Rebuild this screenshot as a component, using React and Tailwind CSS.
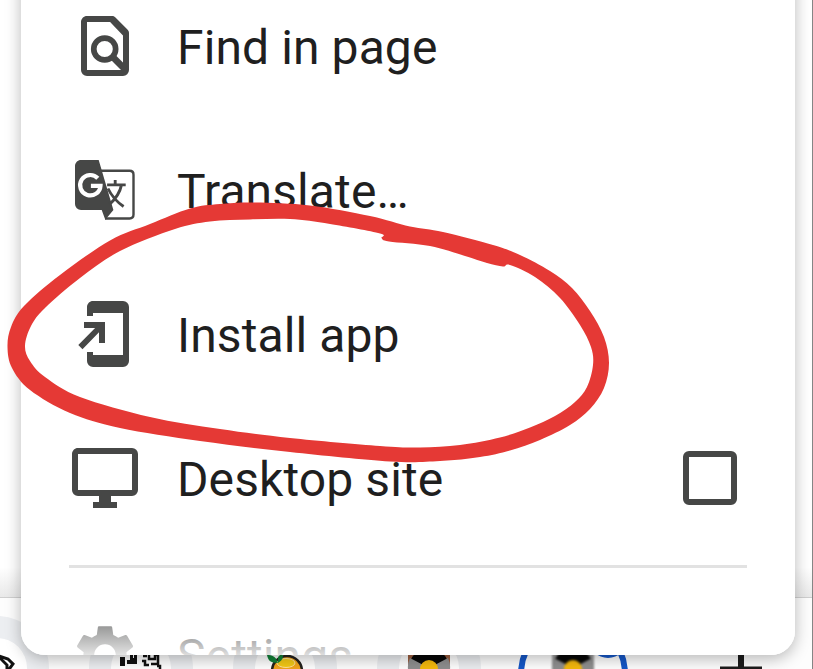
const INK = '#464746';

// Closed smooth curve through the given points (Catmull-Rom converted to Béziers).
function smooth(points) {
  const n = points.length;
  let d = `M${points[0][0]} ${points[0][1]}`;
  for (let i = 0; i < n; i++) {
    const [a, b, c, e] = [points[(i - 1 + n) % n], points[i], points[(i + 1) % n], points[(i + 2) % n]];
    d += `C${b[0] + (c[0] - a[0]) / 6} ${b[1] + (c[1] - a[1]) / 6} ${c[0] - (e[0] - b[0]) / 6} ${c[1] - (e[1] - b[1]) / 6} ${c[0]} ${c[1]}`;
  }
  return d + 'Z';
}

const OUTER = [[7.5, 347], [11, 327], [24, 306], [60, 275], [110, 240.5], [150, 224], [190, 208.5], [220, 204], [255, 202.5], [310, 205.5], [370, 216], [410, 226.5], [443, 232], [493, 245], [520, 255], [550, 271], [572, 288], [590, 311], [604, 337], [609, 363], [604, 388], [590, 409], [570, 425], [540, 440], [510, 450.5], [480, 457], [440, 461], [390, 461.500], [290, 452], [200, 441], [120, 428], [70, 413], [30, 390], [12, 368]];
const INNER = [[25, 346], [31, 326], [45, 308], [80, 278], [120, 251], [175, 229], [210, 221.5], [250, 219.5], [290, 219], [330, 224], [380, 233.5], [381.5, 238], [389, 241.5], [430, 246], [465, 256], [487, 263], [503, 266.5], [510, 265], [535, 277], [560, 298], [580, 325], [591, 347], [593, 365], [587, 387], [575, 402], [555, 416], [530, 427.5], [500, 437.5], [460, 445], [420, 447.5], [380, 446], [290, 438], [220, 429], [150, 417], [80, 397], [45, 377], [30, 361]];

function Icon({ children }) {
  return <svg className="size-[72px] shrink-0" viewBox="0 0 24 24" fill={INK}>{children}</svg>;
}

function Row({ icon, label, children }) {
  return (
    <div className="flex h-36 items-center pr-[58px] pl-12">
      <Icon>{icon}</Icon>
      <span className="ml-9 flex-1 pt-1 text-[48px] leading-none tracking-[0.1px] text-[#1f1f1f]">{label}</span>
      {children}
    </div>
  );
}

const find = (
  <>
    <path fillRule="evenodd" d="M6 2h8.300c.5 0 .8.1 1.100.4l4 4c.4.4.6.8.6 1.300V20a2 2 0 0 1-2 2H6a2 2 0 0 1-2-2V4c0-1.100.9-2 2-2Zm0 2v16h12V8.500L13.700 4Z" />
    <circle cx="11.900" cy="13" r="3.650" fill="none" stroke={INK} strokeWidth="1.900" />
    <path d="m14.300 15.400 4.300 4.300" stroke={INK} strokeWidth="2.200" />
  </>
);
const translate = (
  <>
    <path d="M10 5.600h10.200c.8 0 1.300.5 1.300 1.300v13.300c0 .8-.5 1.300-1.300 1.300H12" fill="none" stroke={INK} strokeWidth=".8" />
    <path d="M4 2h5.900l4.900 16.700-2.700 3.200-1.200-3.200H4a2 2 0 0 1-2-2V4c0-1.100.9-2 2-2Z" />
    <path d="M9.600 8.100A3.400 3.400 0 1 0 10.500 10.600H7.300" fill="none" stroke="#fff" strokeWidth="1.400" />
    <path d="M12.700 10.300h6.200M15.400 8.700v1.600M17.500 10.300c-.5 2.500-2 4.700-4 6.500M13 11.500c1.200 2.500 3 4.500 5.200 6" fill="none" stroke={INK} strokeWidth=".95" />
  </>
);
const install = (
  <>
    <path d="M6 6V3c0-1.100.9-2 2-2h10a2 2 0 0 1 2 2v18a2 2 0 0 1-2 2H8a2 2 0 0 1-2-2v-3h2v1h10V5H8v1Z" />
    <path d="M5 8h7v7h-2v-3.600l-5.500 5.700-1.400-1.400L8.700 10H5Z" />
  </>
);
const desktop = (
  <path fillRule="evenodd" d="M3 2h18a2 2 0 0 1 2 2v12a2 2 0 0 1-2 2h-7v2h2v2H8v-2h2v-2H3a2 2 0 0 1-2-2V4c0-1.100.9-2 2-2Zm0 2v12h18V4Z" />
);
const gear = (
  <path fillRule="evenodd" d="M19.140 12.940c.04-.3.060-.61.060-.940 0-.32-.02-.640-.070-.940l2.030-1.580c.18-.14.230-.41.120-.61l-1.920-3.320c-.12-.22-.37-.29-.59-.22l-2.390.96c-.5-.38-1.030-.7-1.620-.940l-.36-2.540c-.04-.24-.24-.41-.48-.41h-3.840c-.24 0-.43.17-.47.41l-.36 2.540c-.59.24-1.130.57-1.620.940l-2.390-.96c-.22-.08-.47 0-.59.22L2.740 8.870c-.12.210-.08.470.12.610l2.030 1.580c-.05.3-.09.630-.09.940s.02.640.07.940l-2.030 1.580c-.18.14-.23.410-.12.610l1.920 3.320c.12.220.37.290.59.220l2.390-.96c.5.380 1.030.7 1.620.940l.36 2.540c.05.240.24.410.48.410h3.840c.24 0 .44-.17.470-.410l.36-2.540c.59-.24 1.130-.56 1.620-.940l2.390.96c.22.080.470 0 .59-.22l1.920-3.320c.12-.22.070-.47-.12-.610l-2.010-1.580ZM12 15.600c-1.980 0-3.600-1.620-3.600-3.600s1.620-3.600 3.600-3.600 3.600 1.620 3.600 3.600-1.620 3.600-3.600 3.600Z" />
);

function Tab({ children }) {
  return (
    <svg className="h-[72px] w-36 shrink-0" viewBox="-72 -52 144 72">
      <circle r="52" fill="#eceef1" />
      <circle r="30" fill="#fff" />
      {children}
    </svg>
  );
}

function Record({ blurred }) {
  return (
    <g className={blurred ? 'blur-[1px]' : ''}>
      <rect x="-21" y="-21" width="42" height="42" rx="8" fill={blurred ? '#9a9a9a' : '#9c5f40'} />
      <circle r="20" fill="#080808" />
      <path d="M0 0-19-10A21 21 0 0 0-19 8ZM0 0 19-10A21 21 0 0 1 19 8Z" fill="#8f8f8f" />
      <circle cy="1" r="9" fill="#f5b90c" />
    </g>
  );
}

export default function App() {
  return (
    <div className="relative flex h-[669px] w-[813px] flex-col overflow-hidden border-r border-[#858585] bg-[#fdfdfd] font-[Roboto,sans-serif]">
      <div className="h-[598px] shrink-0 border-b border-[#cfcfcf] bg-linear-to-b from-white from-95% to-[#e9e9e9]" />
      <div className="-ml-[75px] flex w-[888px] shrink-0 pt-[18px]">
        <Tab>
          <path d="m-13-17 24 8L16-4 10 4M0-13 10-3V8" fill="none" stroke="#111" strokeWidth="3" />
        </Tab>
        <Tab>
          <path d="M-21-11h5v9h-5zM-14-8h3v-5h3v3h1v-4h3v10h-10Z" fill="#111" />
          <path d="M2-12h4m-5 5h3v4h4M8-14v5h6v-4h3v9h-7m6 2h3v4" fill="none" stroke="#111" strokeWidth="2.500" />
        </Tab>
        <Tab>
          <circle cx="2" cy="3" r="15" fill="#f4a51c" stroke="#25221e" strokeWidth="2.500" />
          <ellipse cx="1" cy="-5" rx="9" ry="4.500" fill="#f5ca16" stroke="#ffe39a" />
          <path d="M-18-13c5 0 9 1 11 8-8 0-10-3-11-8Zm11 2 4-4c2 4 1 7-4 10Z" fill="#128238" />
        </Tab>
        <Tab><Record /></Tab>
        <svg className="h-[72px] w-36 shrink-0" viewBox="-72 -52 144 72">
          <circle cy="6" r="52" fill="#fff" stroke="#1557c8" strokeWidth="6" />
          <Record blurred />
          <circle cx="35" cy="-29" r="19" fill="#1557c8" />
        </svg>
        <svg className="h-[72px] w-36 shrink-0" viewBox="-72 -52 144 72">
          <path d="M24-22V22M3 1.500H45" stroke="#1b1b1b" strokeWidth="6" />
        </svg>
      </div>
      <div className="absolute -top-10 left-[21px] h-[695px] w-[774px] rounded-[24px] shadow-[0_4px_16px_rgba(0,0,0,0.28)]">
        <div className="h-full overflow-hidden rounded-[24px] bg-white pt-[13.500px]">
          <Row icon={find} label="Find in page" />
          <Row icon={translate} label="Translate…" />
          <Row icon={install} label="Install app" />
          <Row icon={desktop} label="Desktop site">
            <span className="size-[54px] rounded-[6px] border-6 border-[#464746]" />
          </Row>
          <hr className="mt-[15.500px] mr-12 ml-12 h-[3px] border-0 bg-[#e2e2e2]" />
          <div className="relative mt-[15px]">
            <Row icon={gear} label="Settings" />
            <div className="absolute inset-x-0 top-[40px] h-[32px] bg-linear-to-b from-white/40 to-white/85" />
          </div>
        </div>
      </div>
      <svg className="pointer-events-none absolute inset-0 h-[669px] w-[813px]" viewBox="0 0 813 669">
        <path fillRule="evenodd" fill="#e53935" d={smooth(OUTER) + smooth(INNER)} />
      </svg>
    </div>
  );
}
